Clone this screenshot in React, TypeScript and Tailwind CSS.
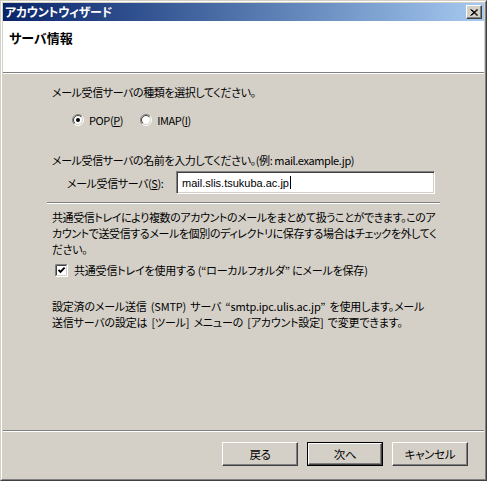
const jp = "font-['Noto_Sans_CJK_JP',sans-serif] [font-feature-settings:'palt']";

function Radio({ checked }: { checked?: boolean }) {
  return (
    <svg width="12" height="12" viewBox="0 0 12 12" className="shrink-0">
      <defs>
        <linearGradient id="rOuter" x1="0" y1="0" x2="1" y2="1">
          <stop offset="0.5" stopColor="#808080" />
          <stop offset="0.5" stopColor="#ffffff" />
        </linearGradient>
        <linearGradient id="rInner" x1="0" y1="0" x2="1" y2="1">
          <stop offset="0.5" stopColor="#404040" />
          <stop offset="0.5" stopColor="#d4d0c8" />
        </linearGradient>
      </defs>
      <circle cx="6" cy="6" r="5.5" fill="none" stroke="url(#rOuter)" />
      <circle cx="6" cy="6" r="4.5" fill="#fff" stroke="url(#rInner)" />
      {checked && <circle cx="6" cy="6" r="2" fill="#000" />}
    </svg>
  );
}

function Checkbox() {
  return (
    <svg width="13" height="13" viewBox="0 0 13 13" className="shrink-0">
      <rect x="0" y="0" width="13" height="13" fill="#fff" />
      <path d="M0.5 12.5V0.5H12.5" fill="none" stroke="#808080" />
      <path d="M1.5 11.5V1.5H11.5" fill="none" stroke="#404040" />
      <path d="M0.5 12.5H12.5V0.5" fill="none" stroke="#fff" />
      <path d="M1.5 11.5H11.5V1.5" fill="none" stroke="#d4d0c8" />
      <path d="M3.5 5.8 L5.5 7.8 L9.6 3.7" fill="none" stroke="#000" strokeWidth="1.9" />
    </svg>
  );
}

function Button({ label, def }: { label: string; def?: boolean }) {
  return (
    <div className={`w-[76px] h-[24px] ${def ? "border border-black" : ""}`}>
      <div className="w-full h-full flex items-center justify-center border-t border-l border-t-white border-l-white border-r border-b border-r-[#404040] border-b-[#404040] shadow-[inset_-1px_-1px_#808080] text-[11.5px] tracking-[-0.3px] text-black">
        {label}
      </div>
    </div>
  );
}

export default function App() {
  return (
    <div className={`w-[487px] h-[481px] border border-t-[#d4d0c8] border-l-[#d4d0c8] border-r-[#404040] border-b-[#404040] ${jp}`}>
      <div className="w-full h-full border border-t-white border-l-white border-r-[#808080] border-b-[#808080] bg-[#d4d0c8] p-px flex flex-col">
        <div className="h-[18px] flex items-center justify-between pl-[2px] pr-[2px] bg-linear-to-r from-[#0a246a] to-[#a6caf0]">
          <span className="text-white text-[12px] font-bold leading-none tracking-[-0.3px]">アカウントウィザード</span>
          <div className="w-[16px] h-[14px] bg-[#d4d0c8] border-t border-l border-t-white border-l-white border-r border-b border-r-[#404040] border-b-[#404040] shadow-[inset_-1px_-1px_#808080] flex items-center justify-center">
            <svg width="8" height="7" viewBox="0 0 8 7">
              <path d="M0.5 0.5 L7 6.5 M1.5 0.5 L8 6.5 M7 0.5 L0.5 6.5 M8 0.5 L1.5 6.5" stroke="#000" strokeWidth="1" />
            </svg>
          </div>
        </div>

        <div className="h-[51px] bg-white pl-[6px] pt-[9px]">
          <div className="text-[13px] font-bold leading-[16px] text-black">サーバ情報</div>
        </div>
        <div className="h-px bg-[#808080]" />
        <div className="h-px bg-white" />

        <div className="flex-1 flex flex-col text-[11px] tracking-[-0.4px] leading-[16px] text-black">
          <div className="pl-[49px] mt-[10px] whitespace-nowrap">メール受信サーバの種類を選択してください。</div>

          <div className="pl-[69px] mt-[12px] flex items-center h-[16px]">
            <Radio checked />
            <span className="ml-[5px]">
              POP(<span className="underline">P</span>)
            </span>
            <span className="ml-[17px]" />
            <Radio />
            <span className="ml-[5px]">
              IMAP(<span className="underline">I</span>)
            </span>
          </div>

          <div className="pl-[49px] mt-[24px] whitespace-nowrap">
            メール受信サーバの名前を入力してください。(例: mail.example.jp)
          </div>

          <div className="pl-[64px] mt-[3px] flex items-center">
            <span className="w-[109px] whitespace-nowrap">
              メール受信サーバ(<span className="underline">S</span>):
            </span>
            <div className="w-[259px] h-[23px] bg-white border-t border-l border-t-[#808080] border-l-[#808080] border-r border-b border-r-white border-b-white shadow-[inset_1px_1px_#404040,inset_-1px_-1px_#d4d0c8] flex items-center pl-[5px] font-['Liberation_Sans',sans-serif] text-[11px] tracking-normal">
              mail.slis.tsukuba.ac.jp
              <span className="w-px h-[13px] bg-black ml-px" />
            </div>
          </div>

          <div className="ml-[44px] w-[393px] mt-[8px]">
            <div className="h-px bg-[#808080]" />
            <div className="h-px bg-white" />
          </div>

          <div className="pl-[49px] mt-[5px] whitespace-nowrap">
            共通受信トレイにより複数のアカウントのメールをまとめて扱うことができます。このア
            <br />
            カウントで送受信するメールを個別のディレクトリに保存する場合はチェックを外してく
            <br />
            ださい。
          </div>

          <div className="pl-[52px] mt-[5px] flex items-center h-[16px]">
            <Checkbox />
            <span className="ml-[6px] whitespace-nowrap tracking-[-0.2px]">共通受信トレイを使用する (“ローカルフォルダ” にメールを保存)</span>
          </div>

          <div className="pl-[49px] mt-[20px] whitespace-nowrap tracking-[-0.2px] [word-spacing:2px]">
            設定済のメール送信 (SMTP) サーバ “smtp.ipc.ulis.ac.jp” を使用します。メール
            <br />
            送信サーバの設定は [ツール] メニューの [アカウント設定] で変更できます。
          </div>

          <div className="mt-auto">
            <div className="h-px bg-[#808080]" />
            <div className="h-px bg-white" />
          </div>

          <div className="flex justify-end gap-[9px] pr-[16px] mt-[10px] mb-[12px]">
            <Button label="戻る" />
            <Button label="次へ" def />
            <Button label="キャンセル" />
          </div>
        </div>
      </div>
    </div>
  );
}
